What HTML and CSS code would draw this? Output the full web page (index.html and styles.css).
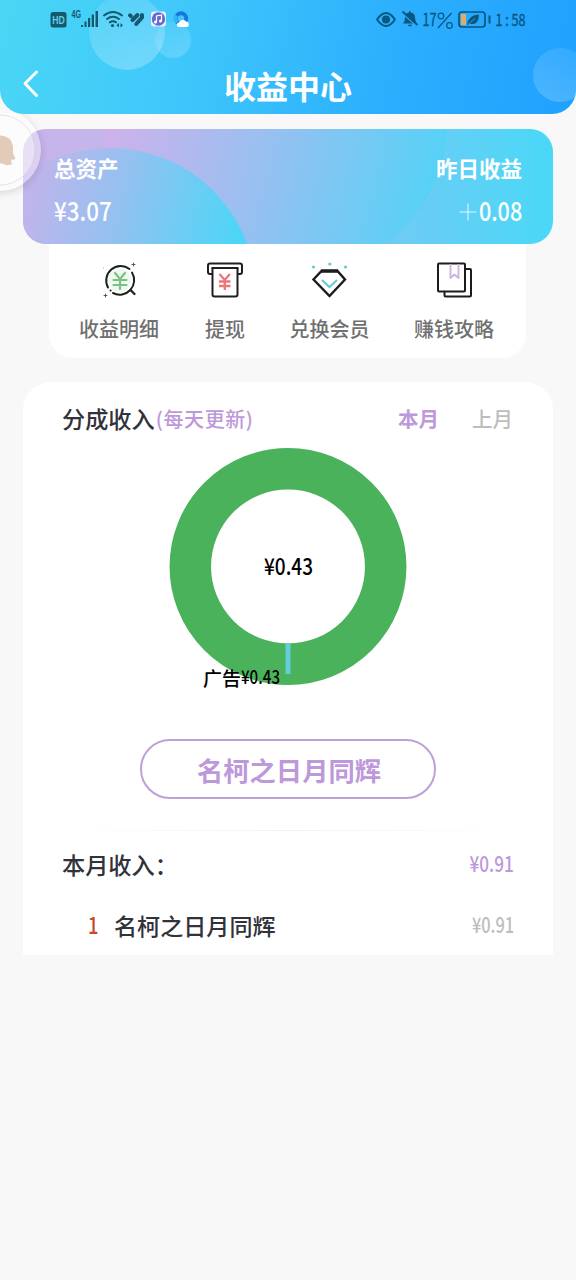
FILE: index.html
```html
<!DOCTYPE html>
<html lang="zh-CN">
<head>
<meta charset="utf-8">
<meta name="viewport" content="width=device-width">
<title>收益中心</title>
<link rel="stylesheet" href="styles.css">
</head>
<body>
<header class="header">
  <span class="bubble bubble-large"></span>
  <span class="bubble bubble-small"></span>
  <span class="bubble bubble-edge"></span>
  <div class="status">
    <svg class="status-left" width="150" height="34" viewBox="45 1 150 34">
      <g fill="#14596f" stroke="none">
        <rect x="50.500" y="12" width="16" height="15.500" rx="2.500"/>
        <text x="52.300" y="23.500" class="st-hd" textLength="12.500" lengthAdjust="spacingAndGlyphs">HD</text>
        <text x="71.500" y="18" class="st-4g" textLength="9.500" lengthAdjust="spacingAndGlyphs">4G</text>
        <path d="M81 25h2v2h-2zM84.500 21.500h2v5.500h-2zM88 18h2.200v9h-2.200zM91.700 14.500h2.300v12.500h-2.300zM95.500 11h2.500v16h-2.500z"/>
        <circle cx="112.500" cy="25.500" r="1.600"/>
        <path d="M119 23l-2.500 2.200 2.500 2.200zM120.500 23l2.500 2.200-2.500 2.200z"/>
      </g>
      <g fill="none" stroke="#14596f" stroke-width="2" stroke-linecap="round">
        <path d="M104 15.500q9-7 18 0M107 19q6-4.500 12 0M109.800 22.300q3.200-2 6.200 0"/>
        <path d="M130 15.300l.8.700M132.500 20l5-5M136.300 24l5.700-6.500V15" stroke-width="4" stroke-linejoin="round"/>
      </g>
      <rect x="151" y="11.500" width="15" height="15" rx="3" fill="#e9f0ff"/>
      <circle cx="158.500" cy="19" r="6.700" fill="#6669cf"/>
      <path d="M156.500 22v-6l5-1v6" fill="none" stroke="#fff" stroke-width="1.200"/>
      <circle cx="155.500" cy="22" r="1.500" fill="#fff"/><circle cx="160.500" cy="21" r="1.500" fill="#fff"/>
      <circle cx="181" cy="18.500" r="5.200" fill="none" stroke="#1677df" stroke-width="4"/>
      <path d="M177 22.500a5.600 5.600 0 0 1-.5-7" fill="none" stroke="#31b5f7" stroke-width="3.600"/>
      <path d="M178.500 27a2.300 2.300 0 0 1 .5-4.500 4 4 0 0 1 7-1 3 3 0 0 1 1.500 5.500z" fill="#fff"/>
    </svg>
    <svg class="status-right" width="170" height="34" viewBox="370 1 170 34">
      <g fill="none" stroke="#09567f" stroke-width="1.900">
        <path d="M377 19.500q9-13 18 0q-9 13-18 0z"/>
        <circle cx="386" cy="19.500" r="3"/>
        <rect x="459" y="12" width="26" height="15" rx="3" stroke-width="1.700"/>
        <path d="M489.500 15.500v8" stroke-width="2"/>
      </g>
      <circle cx="386" cy="19.500" r="2.300" fill="#09567f"/>
      <path d="M403 23.500q2-2 2-6 0-4.500 4-5v-1.200h1.500v1.200q4.500.5 4.500 5 0 4 2 6zM407.500 24.700h5q-2.500 3.500-5 0z" fill="#09567f"/>
      <path d="M402.500 13.500l13.500 12" stroke="#2caffd" stroke-width="1.300"/>
      <path d="M402.500 11.500l15 13.500" stroke="#09567f" stroke-width="1.700"/>
      <text x="422.500" y="26.300" class="st-num" textLength="14" lengthAdjust="spacingAndGlyphs">17</text>
      <g fill="none" stroke="#09567f" stroke-width="1.200"><circle cx="441" cy="16" r="2.800"/><circle cx="449.500" cy="25.500" r="2.800"/><path d="M451.500 13l-13.500 15"/></g>
      <rect x="461" y="14" width="5" height="11" fill="#e5aa62"/>
      <path d="M467 25q1-10 12-10.500-.5 12-10 9l-1 1.800z" fill="#09567f"/>
      <path d="M468 24.500l7-6" stroke="#2caffd" stroke-width=".8"/>
      <text x="495.500" y="26" class="st-num st-time" textLength="30" lengthAdjust="spacingAndGlyphs">1 : 58</text>
    </svg>
  </div>
  <div class="nav">
    <svg class="back" width="18" height="30" viewBox="0 0 18 30"><path d="M14.500 3L3 14.500l11.500 12" fill="none" stroke="#fff" stroke-width="3" stroke-linecap="round" stroke-linejoin="round"/></svg>
    <h1 class="title">收益中心</h1>
  </div>
</header>

<main class="page">
  <section class="assets">
    <svg class="assets-art" width="530" height="115" viewBox="23 129 530 115">
      <defs>
        <linearGradient id="base" x1="0" y1="0" x2="1" y2="0"><stop offset="0" stop-color="#c7b4ea"/><stop offset=".2" stop-color="#c2b6eb"/><stop offset=".68" stop-color="#72caf4"/><stop offset="1" stop-color="#49d8f7"/></linearGradient>
        <linearGradient id="mid" gradientUnits="userSpaceOnUse" x1="103" y1="110" x2="435" y2="200"><stop offset="0" stop-color="#d2b1ea"/><stop offset=".5" stop-color="#96c0f1"/><stop offset="1" stop-color="#55d2f6"/></linearGradient>
        <linearGradient id="front" gradientUnits="userSpaceOnUse" x1="18" y1="185" x2="240" y2="240"><stop offset="0" stop-color="#c5b3eb"/><stop offset=".45" stop-color="#94c1f0"/><stop offset="1" stop-color="#4bd6f7"/></linearGradient>
      </defs>
      <path fill="url(#base)" d="M23 129h530v115H23z"/>
      <path fill="url(#mid)" d="M103 129H447Q443 200 385 244H120Q103 190 103 129z"/>
      <circle cx="110" cy="294" r="146" fill="url(#front)"/>
    </svg>
    <div class="asset">
      <span class="asset-label">总资产</span>
      <span class="asset-value"><span class="num">¥3.07</span></span>
    </div>
    <div class="asset asset-end">
      <span class="asset-label">昨日收益</span>
      <span class="asset-value"><svg class="plus" width="18" height="18" viewBox="0 0 18 18"><path d="M9 .5v17M.5 9h17" stroke="#fff" stroke-opacity=".85" stroke-width="1"/></svg><span class="num num-gain">0.08</span></span>
    </div>
  </section>

  <nav class="menu">
    <a class="menu-item">
      <svg width="40" height="40" viewBox="100 260 40 40" fill="none" stroke-linecap="round">
        <circle cx="120.800" cy="280" r="11.500" fill="#eff8ef"/>
        <path d="M109 287.500A14.500 14.500 0 0 1 130.500 269M133 272.500A14.500 14.500 0 0 1 114 293" stroke="#1f1f1f" stroke-width="2"/>
        <path d="M131.500 290l4 4" stroke="#1f1f1f" stroke-width="2.300"/>
        <path d="M111.500 290.500h.1" stroke="#1f1f1f" stroke-width="2"/>
        <path d="M116 273l5 6 5-6M114.500 280h13M114.500 285h13M121 279v10" stroke="#78c381" stroke-width="2.200"/>
        <path d="M134.500 263v3M133 264.500h3M106.500 294v3M105 295.500h3" stroke="#555" stroke-width="1"/>
        <path d="M104.500 268h.1" stroke="#aaa"/>
      </svg>
      <span>收益明细</span>
    </a>
    <a class="menu-item">
      <svg width="40" height="40" viewBox="205 260 40 40" fill="none" stroke="#1f1f1f" stroke-width="2" stroke-linejoin="round">
        <path d="M212 274h-2q-2 0-2-2v-6.500q0-2 2-2h30q2 0 2 2v6.500q0 2-2 2h-2"/>
        <path d="M211.500 268h27"/>
        <path d="M212.500 268v26.500q0 2 2 2h21q2 0 2-2V268"/>
        <path d="M219.500 274l5.200 6 5.200-6M219 281.500h11.500M219 286h11.500M224.800 280v10" stroke="#ed7679" stroke-width="2.300"/>
      </svg>
      <span>提现</span>
    </a>
    <a class="menu-item">
      <svg width="40" height="40" viewBox="310 260 40 40" fill="none">
        <path d="M321.500 271h16l7.500 8.500-15.500 16.500-16-16.500z" stroke="#1c1c1c" stroke-width="2.400"/>
        <path d="M321 271h17" stroke="#1c1c1c" stroke-width="3.400"/>
        <path d="M322 280l7.500 7 7.500-7" stroke="#68cad4" stroke-width="2.200"/>
        <g fill="#65cbd4"><circle cx="313.500" cy="267" r="1.600"/><circle cx="329.800" cy="264" r="1.600"/><circle cx="345.500" cy="267" r="1.600"/></g>
      </svg>
      <span>兑换会员</span>
    </a>
    <a class="menu-item">
      <svg width="40" height="40" viewBox="434 260 40 40" fill="none" stroke="#1c1c1c" stroke-width="2" stroke-linejoin="round">
        <rect x="438" y="263.500" width="27" height="28" rx="1"/>
        <path d="M465 269h5q1 0 1 1v25.500q0 1-1 1h-24.500q-1 0-1-1v-4"/>
        <path d="M450.500 264v14l4-3.500 4 3.500v-14" stroke="#cdb2e2" stroke-width="1.900"/>
      </svg>
      <span>赚钱攻略</span>
    </a>
  </nav>

  <section class="income">
    <div class="income-head">
      <h2 class="heading">分成收入</h2><span class="hint">(每天更新)</span>
      <div class="tabs"><span class="tab tab-active">本月</span><span class="tab">上月</span></div>
    </div>
    <svg class="chart" width="530" height="270" viewBox="23 440 530 270">
      <circle cx="288" cy="566.500" r="97.700" fill="none" stroke="#4bb25c" stroke-width="41.500"/>
      <path d="M288 643v31" stroke="#61cddd" stroke-width="5"/>
      <text x="264" y="575" class="chart-total" textLength="49" lengthAdjust="spacingAndGlyphs">¥0.43</text>
      <text x="203" y="685.500" class="chart-label" textLength="38" lengthAdjust="spacingAndGlyphs">广告</text>
      <text x="241" y="684" class="chart-label" textLength="39" lengthAdjust="spacingAndGlyphs">¥0.43</text>
    </svg>
    <button class="work">名柯之日月同辉</button>
    <div class="rule"></div>
    <div class="row"><span class="heading">本月收入：</span><span class="num sum">¥0.91</span></div>
    <div class="row row-item"><span class="rank">1</span><span class="name">名柯之日月同辉</span><span class="num sum sum-muted">¥0.91</span></div>
  </section>
</main>

<div class="floater">
  <svg width="82" height="82" viewBox="-41 109 82 82">
    <circle cx="0" cy="150" r="35" fill="#fff" fill-opacity=".35" stroke="#c8bfc8" stroke-opacity=".4"/>
    <path d="M-14 162V146Q-10 135 1 135.500q10 .5 12 11v7l2.500 5-2.500 1.500-1-1-1 3 1.500 2q-4 2-8 .5l-2-1h-14z" fill="#e3cbb9"/>
  </svg>
</div>
</body>
</html>
```
FILE: styles.css
```css
* { box-sizing: border-box; }
body {
  margin: 0;
  min-height: 1280px;
  background: #f8f8f8;
  color: #32323a;
  font-family: "Noto Sans CJK SC", sans-serif;
  font-weight: 500;
  position: relative;
  overflow-x: hidden;
}
svg { display: block; }
h1, h2 { margin: 0; font-weight: 500; }

.header {
  position: relative;
  height: 113.500px;
  overflow: hidden;
  border-radius: 0 0 24px 24px;
  background: linear-gradient(102deg, #49d6f5 2%, #3ec6fb 34%, #2caffd 67%, #20a2ff 97%);
}
.bubble { position: absolute; border-radius: 50%; }
.bubble-large { left: 89px; top: -6px; width: 76px; height: 76px; background: linear-gradient(155deg, rgba(255,255,255,.08), rgba(255,255,255,.28)); }
.bubble-small { left: 155px; top: 22px; width: 36px; height: 36px; background: linear-gradient(150deg, rgba(255,255,255,.05), rgba(255,255,255,.2)); }
.bubble-edge { left: 533px; top: 48px; width: 54px; height: 54px; background: linear-gradient(200deg, rgba(255,255,255,.08), rgba(255,255,255,.2)); }
.status { position: relative; display: flex; justify-content: space-between; padding: 1px 36px 0 45px; }
.status svg { overflow: visible; }
.st-hd { font: 700 10px "Liberation Sans", sans-serif; fill: #63cce6; }
.st-4g { font: 700 10px "Liberation Sans", sans-serif; }
.st-num { font: 400 17px "Noto Sans CJK SC", sans-serif; fill: #09567f; stroke: #09567f; stroke-width: .4px; }
.st-time { font-size: 16px; }
.nav { position: relative; display: grid; grid-template-columns: 60px 1fr 60px; align-items: center; height: 60px; margin-top: 20px; }
.back { margin: -3px 0 0 22px; }
.title { color: #fff; font-size: 32px; font-weight: 700; line-height: 60px; text-align: center; }

.page { padding: 15.500px 23px 0; }
.assets { position: relative; z-index: 1; display: flex; justify-content: space-between; height: 115px; padding: 24px 31px 0; border-radius: 23px; overflow: hidden; color: #fff; }
.assets-art { position: absolute; inset: 0; }
.asset { position: relative; display: flex; flex-direction: column; }
.asset-end { align-items: flex-end; }
.asset-label { font-size: 21.500px; font-weight: 700; line-height: 30px; height: 42px; }
.asset-value { display: flex; align-items: center; height: 30px; line-height: 30px; font-size: 26px; }
.num { display: inline-block; transform: scaleX(.86); transform-origin: left center; }
.num-gain { transform: scaleX(.83); transform-origin: right center; }
.plus { margin: 3px -7px 0 0; }

.menu { display: grid; grid-template-columns: 120px 90px 118px 132px; margin: 0 27.500px 0 26px; height: 114px; padding: 16px 8px 0; background: #fff; border-radius: 0 0 24px 24px; }
.menu-item { display: flex; flex-direction: column; align-items: center; color: #707070; font-size: 20px; line-height: 30px; }
.menu-item span { margin-top: 14px; white-space: nowrap; }
.menu-item:nth-child(1) { padding-left: 4px; }
.menu-item:nth-child(2) { padding-left: 6px; }
.menu-item:nth-child(3) { padding-left: 7px; }
.menu-item:nth-child(4) { padding-left: 6px; }

.income { height: 572.500px; margin-top: 24px; padding-top: 14px; background: #fff; border-radius: 28px 28px 0 0; }
.income-head { display: flex; align-items: center; height: 44px; padding: 0 40px 0 39px; }
.heading { font-size: 23.200px; line-height: 34px; font-weight: 500; }
.hint { margin-left: 1px; color: #bd98da; font-size: 20px; letter-spacing: .6px; }
.tabs { display: flex; gap: 33px; margin: -1px 0 0 auto; font-size: 20.500px; }
.tab { color: #bdbdbd; }
.tab-active { color: #bd98da; font-weight: 700; }
.chart-total { font-size: 23px; fill: #000; }
.chart-label { font-size: 19px; fill: #000; }
.work { display: block; width: 296px; height: 60px; margin: 29px auto 0; padding: 2px 0 0 2px; border: 2px solid #bf9fd6; border-radius: 30px; background: #fff; color: #bd98da; font: 700 26.300px/54px "Noto Sans CJK SC", sans-serif; }
.rule { height: 1px; margin: 31px 39px 0; background: linear-gradient(90deg, #fff, #f2f2f2 50%, #fff); }
.row { display: flex; align-items: center; height: 65px; padding: 0 39px; }
.sum { margin: -4px 0 0 auto; color: #bd98da; font-size: 22px; transform: scaleX(.78); transform-origin: right center; }
.row-item { height: 58px; padding-left: 65px; }
.rank { width: 26px; margin-top: -3px; color: #cb4823; font-size: 23px; transform: scaleX(.8); transform-origin: left center; }
.name { font-size: 23.100px; }
.sum-muted { margin-top: -3px; color: #bdbdbd; font-size: 21px; }

.floater { position: absolute; left: -41px; top: 109px; z-index: 2; width: 82px; height: 82px; border-radius: 50%; background: rgba(255,255,255,.38); box-shadow: 0 2px 9px rgba(0,0,0,.14); clip-path: inset(4px -20px -20px -20px); }
```
